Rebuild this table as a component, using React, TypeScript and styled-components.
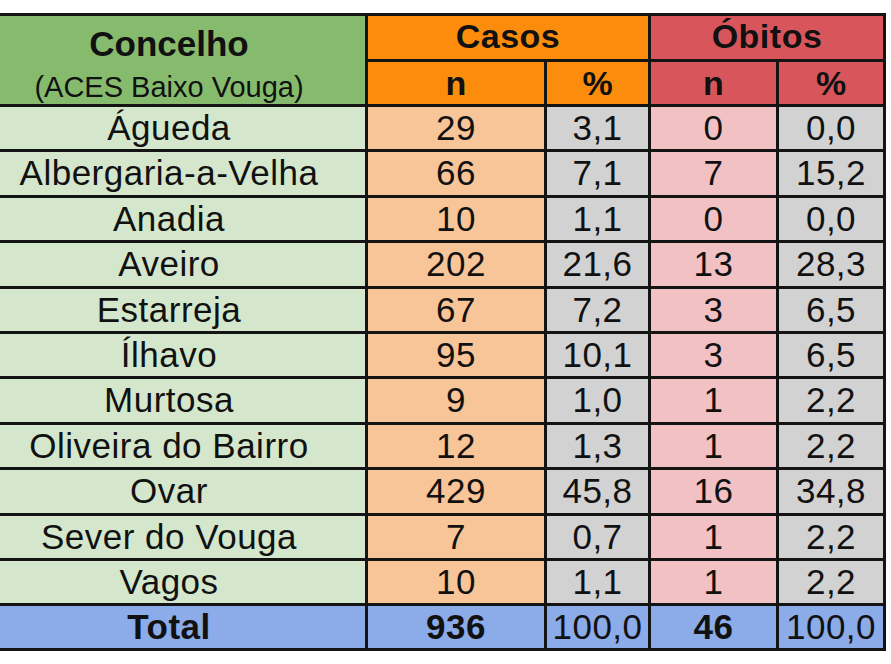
import styled, { createGlobalStyle } from 'styled-components';

const GlobalStyle = createGlobalStyle`
  html, body {
    margin: 0;
    padding: 0;
    background: #fff;
    overflow: hidden;
  }
  body {
    font-family: 'Liberation Sans', Arial, sans-serif;
    color: #111;
  }
`;

const tones = {
  greenHead: '#86bb6e',
  green: '#d4e7cc',
  orangeHead: '#fc8c0c',
  orange: '#f8c598',
  gray: '#d2d2d2',
  redHead: '#d8565b',
  pink: '#f1c1c4',
  blue: '#8cabe9',
};

type Tone = keyof typeof tones;

// first column runs off the left edge of the shot, like the original crop
const Table = styled.div`
  display: grid;
  grid-template-columns: 392px 176px 101px 125px 104px;
  grid-template-rows: 43px 42px repeat(11, 42.4px) 42px;
  gap: 3px;
  padding: 3px;
  width: max-content;
  margin: 13px 0 0 -30px;
  background: #141414;
`;

const Concelho = styled.div`
  grid-row: span 2;
  background: ${tones.greenHead};
  text-align: center;
  padding-top: 6px;
`;

const ConcelhoTitle = styled.div`
  font-size: 35px;
  line-height: 44px;
  font-weight: bold;
`;

const ConcelhoSub = styled.div`
  font-size: 29px;
  line-height: 42px;
`;

const GroupHead = styled.div<{ $tone: Tone }>`
  grid-column: span 2;
  background: ${(p) => tones[p.$tone]};
  text-align: center;
  font-size: 34px;
  line-height: 41px;
  font-weight: bold;
  letter-spacing: 0.5px;
`;

const SubHead = styled.div<{ $tone: Tone }>`
  background: ${(p) => tones[p.$tone]};
  text-align: center;
  font-size: 34px;
  line-height: 42px;
  font-weight: bold;
`;

const Cell = styled.div<{ $tone: Tone; $bold?: boolean }>`
  background: ${(p) => tones[p.$tone]};
  text-align: center;
  font-size: 35px;
  line-height: 42px;
  letter-spacing: 0.5px;
  font-weight: ${(p) => (p.$bold ? 'bold' : 'normal')};
  white-space: nowrap;
`;

const rows: [string, string, string, string, string][] = [
  ['Águeda', '29', '3,1', '0', '0,0'],
  ['Albergaria-a-Velha', '66', '7,1', '7', '15,2'],
  ['Anadia', '10', '1,1', '0', '0,0'],
  ['Aveiro', '202', '21,6', '13', '28,3'],
  ['Estarreja', '67', '7,2', '3', '6,5'],
  ['Ílhavo', '95', '10,1', '3', '6,5'],
  ['Murtosa', '9', '1,0', '1', '2,2'],
  ['Oliveira do Bairro', '12', '1,3', '1', '2,2'],
  ['Ovar', '429', '45,8', '16', '34,8'],
  ['Sever do Vouga', '7', '0,7', '1', '2,2'],
  ['Vagos', '10', '1,1', '1', '2,2'],
];

export default function App() {
  return (
    <>
      <GlobalStyle />
      <Table>
        <Concelho>
          <ConcelhoTitle>Concelho</ConcelhoTitle>
          <ConcelhoSub>(ACES Baixo Vouga)</ConcelhoSub>
        </Concelho>
        <GroupHead $tone="orangeHead">Casos</GroupHead>
        <GroupHead $tone="redHead">Óbitos</GroupHead>
        <SubHead $tone="orangeHead">n</SubHead>
        <SubHead $tone="orangeHead">%</SubHead>
        <SubHead $tone="redHead">n</SubHead>
        <SubHead $tone="redHead">%</SubHead>

        {rows.map(([name, casos, casosPct, obitos, obitosPct]) => (
          <>
            <Cell key={name} $tone="green">{name}</Cell>
            <Cell $tone="orange">{casos}</Cell>
            <Cell $tone="gray">{casosPct}</Cell>
            <Cell $tone="pink">{obitos}</Cell>
            <Cell $tone="gray">{obitosPct}</Cell>
          </>
        ))}

        <Cell $tone="blue" $bold>Total</Cell>
        <Cell $tone="blue" $bold>936</Cell>
        <Cell $tone="blue">100,0</Cell>
        <Cell $tone="blue" $bold>46</Cell>
        <Cell $tone="blue">100,0</Cell>
      </Table>
    </>
  );
}
